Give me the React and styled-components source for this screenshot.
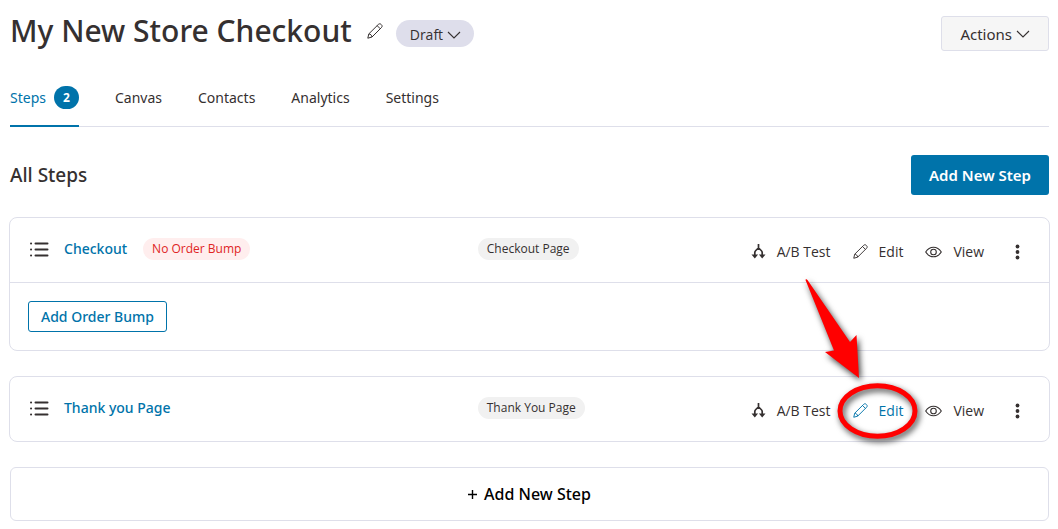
import React from 'react';
import styled, { createGlobalStyle } from 'styled-components';

const GlobalStyle = createGlobalStyle`
    :root {
        --main-blue: #0073aa;
        --main-border: #dedfea;
        --main-text: #353030;
        --medium-font: "Noto Sans", "Open Sans", sans-serif;
    }

    * {
        box-sizing: border-box;
    }

    body {
        margin: 0;
        background-color: #fff;
        color: var(--main-text);
        font-family: "Open Sans", "Noto Sans", sans-serif;
        font-size: 14px;
        line-height: 20px;
    }

    button {
        font-family: inherit;
        color: inherit;
        cursor: pointer;
    }

    h1, h2, h3 {
        margin: 0;
        font-family: var(--medium-font);
        font-weight: 500;
    }

    svg {
        display: block;
        flex-shrink: 0;
    }
`;

const Page = styled.main`
    padding: 10px 9px 8px 10px;
`;

const Header = styled.header`
    display: flex;
    justify-content: space-between;
    align-items: flex-end;
`;

const TitleGroup = styled.div`
    display: flex;
    align-items: center;
    height: 41px;

    h1 {
        font-size: 30px;
        line-height: 40px;
    }
`;

const IconButton = styled.button`
    display: flex;
    padding: 0;
    margin: 0 13px 0 15px;
    border: none;
    background: none;
`;

const StatusButton = styled.button`
    display: flex;
    align-items: center;
    gap: 4px;
    height: 27px;
    margin-top: 6px;
    padding: 2px 13px 0 14px;
    border: none;
    border-radius: 14px;
    background-color: #dedeeb;
    font-size: 14px;
`;

const ActionsButton = styled.button`
    display: flex;
    align-items: center;
    gap: 4px;
    height: 35px;
    padding: 0 18px;
    border: 1px solid var(--main-border);
    border-radius: 3px;
    background-color: #f6f6f6;
    font-family: var(--medium-font);
    font-size: 15px;
`;

const Tabs = styled.nav`
    display: flex;
    gap: 36px;
    height: 44px;
    margin: 32px 0 28px;
    border-bottom: 1px solid var(--main-border);
`;

const Tab = styled.a`
    display: flex;
    gap: 8px;
    height: 44px;
    line-height: 30px;
    color: ${({active}) => active ? 'var(--main-blue)' : 'inherit'};
    border-bottom: ${({active}) => active ? '2px solid var(--main-blue)' : 'none'};
    font-family: var(--medium-font);
    font-size: 14px;
    text-decoration: none;
`;

const Count = styled.span`
    width: 25px;
    height: 23px;
    margin-top: 3px;
    border-radius: 12px;
    background-color: var(--main-blue);
    color: #fff;
    font-size: 12px;
    font-weight: 700;
    line-height: 23px;
    text-align: center;
`;

const SectionHead = styled.div`
    display: flex;
    justify-content: space-between;
    align-items: center;
    margin-bottom: 22px;

    h2 {
        font-size: 19px;
        line-height: 26px;
    }
`;

const PrimaryButton = styled.button`
    height: 40px;
    padding: 0 18px;
    border: none;
    border-radius: 3px;
    background-color: var(--main-blue);
    color: #fff;
    font-family: var(--medium-font);
    font-size: 15px;
    font-weight: 600;
`;

const Card = styled.section`
    margin: 0 -1px 25px;
    border: 1px solid var(--main-border);
    border-radius: 8px;
`;

const CardRow = styled.div`
    display: grid;
    grid-template-columns: 45% 1fr auto;
    align-items: center;
    height: 64px;
    padding: 0 24px 2px 20px;
`;

const CardFooter = styled.div`
    padding: 18px;
    border-top: 1px solid var(--main-border);
`;

const StepName = styled.div`
    display: flex;
    align-items: center;

    a {
        margin: 0 16px 0 15px;
        color: var(--main-blue);
        font-family: var(--medium-font);
        font-size: 14px;
        font-weight: 500;
        text-decoration: none;
    }
`;

const Badge = styled.span`
    justify-self: start;
    padding: 0 9px;
    border-radius: 11px;
    background-color: ${({danger}) => danger ? '#ffeeee' : '#f1f1f1'};
    color: ${({danger}) => danger ? '#e02424' : 'inherit'};
    font-size: 12px;
    line-height: 22px;
`;

const OutlineButton = styled.button`
    height: 31px;
    padding: 0 12px;
    border: 1px solid var(--main-blue);
    border-radius: 3px;
    background-color: #fff;
    color: var(--main-blue);
    font-family: var(--medium-font);
    font-size: 14px;
    font-weight: 500;
`;

const RowActions = styled.div`
    display: flex;
    align-items: center;
    gap: 22px;
    padding: 5px 5px 0 0;
`;

const RowAction = styled.button`
    position: relative;
    display: flex;
    align-items: center;
    gap: 11px;
    padding: 0;
    border: none;
    background: none;
    color: ${({active}) => active ? 'var(--main-blue)' : 'inherit'};
    font-size: 14px;
    line-height: 20px;
`;

const MoreButton = styled(RowAction)`
    margin-left: 9px;
`;

const Pointer = styled.svg`
    position: absolute;
    top: -131px;
    left: -56px;
    pointer-events: none;
    filter: drop-shadow(2px 3px 3px rgba(0, 0, 0, 0.75));
`;

const AddRow = styled.button`
    display: flex;
    align-items: center;
    justify-content: center;
    gap: 7px;
    width: 100%;
    height: 54px;
    border: 1px solid var(--main-border);
    border-radius: 6px;
    background-color: #fff;
    color: #000;
    font-family: var(--medium-font);
    font-size: 16px;
    font-weight: 500;
`;

const Chevron = () => (
    <svg width="14" height="8" viewBox="0 0 14 8" fill="none" stroke="currentColor" strokeWidth="1.1">
        <path d="M1 1l6 6 6-6" />
    </svg>
);

const PencilIcon = ({size = 16}) => (
    <svg width={size} height={size} viewBox="0 0 16 16" fill="none" stroke="currentColor" strokeWidth="1" strokeLinejoin="round">
        <path d="M.8 15.200l1-4.300L11.400 1.400c.8-.8 1.900-.8 2.700 0l.4.4c.8.8.8 1.900 0 2.700L5 14z" />
        <path d="M10.200 2.700l3.100 3.100M1.900 10.900c1.600.1 2.900 1.400 3.100 3.100" />
    </svg>
);

const EyeIcon = () => (
    <svg width="17" height="12" viewBox="0 0 17 12" fill="none" stroke="currentColor" strokeWidth="1.100">
        <path d="M.7 6C2.600 3 5.300 1.200 8.500 1.200S14.400 3 16.300 6c-1.900 3-4.600 4.800-7.800 4.800S2.600 9 .7 6z" />
        <circle cx="8.500" cy="6" r="2.800" />
    </svg>
);

const SplitIcon = () => (
    <svg width="15" height="15" viewBox="0 0 14 15" fill="none" stroke="currentColor" strokeWidth="1.7">
        <path d="M7 0v4.500M3.300 12.500V8.600c0-.9.4-1.500 1-2.100L7 4l2.700 2.500c.6.6 1 1.200 1 2.100v3.900" />
        <path d="M0 10.600h6.600L3.300 14.500zM7.400 10.600H14l-3.300 3.900z" fill="currentColor" stroke="none" />
    </svg>
);

const ListIcon = () => (
    <svg width="19" height="15" viewBox="0 0 19 15" fill="none" stroke="currentColor" strokeWidth="2" strokeLinecap="round">
        <path d="M5.500 1.500H17.500M5.500 7.500H17.500M5.500 13.500H17.500M1 1.500h.1M1 7.500h.1M1 13.500h.1" />
    </svg>
);

const DotsIcon = () => (
    <svg width="5" height="16" viewBox="0 0 5 16" fill="currentColor">
        <circle cx="2.500" cy="2.500" r="1.900" />
        <circle cx="2.500" cy="8" r="1.900" />
        <circle cx="2.500" cy="13.500" r="1.900" />
    </svg>
);

const PlusIcon = () => (
    <svg width="9" height="9" viewBox="0 0 9 9" stroke="currentColor" strokeWidth="1.400">
        <path d="M4.500 0v9M0 4.500h9" />
    </svg>
);

const EditPointer = () => (
    <Pointer width="140" height="190" viewBox="0 0 140 190" aria-hidden="true">
        <path d="M9 9L10.500 10L53 72L59.500 65L62 108L28 82L37 80.500L8.500 10z" fill="#f00" />
        <ellipse cx="80.500" cy="141" rx="37.500" ry="25.200" fill="none" stroke="#f00" strokeWidth="5" />
    </Pointer>
);

const tabs = ['Canvas', 'Contacts', 'Analytics', 'Settings'];

const steps = [
    {name: 'Checkout', type: 'Checkout Page', bump: true},
    {name: 'Thank you Page', type: 'Thank You Page', highlighted: true},
];

const StepCard = ({data}) => {
    const {name, type, bump, highlighted} = data;
    return (
        <Card>
            <CardRow>
                <StepName>
                    <ListIcon />
                    <a href="#step">{name}</a>
                    {bump ? <Badge danger>No Order Bump</Badge> : null}
                </StepName>
                <Badge>{type}</Badge>
                <RowActions>
                    <RowAction><SplitIcon />A/B Test</RowAction>
                    <RowAction active={highlighted}>
                        <PencilIcon size={15} />Edit
                        {highlighted ? <EditPointer /> : null}
                    </RowAction>
                    <RowAction><EyeIcon />View</RowAction>
                    <MoreButton aria-label="More"><DotsIcon /></MoreButton>
                </RowActions>
            </CardRow>
            {
                bump ?
                <CardFooter>
                    <OutlineButton>Add Order Bump</OutlineButton>
                </CardFooter>
                :
                null
            }
        </Card>
    )
};

const App = () => (
    <>
        <GlobalStyle />
        <Page>
            <Header>
                <TitleGroup>
                    <h1>My New Store Checkout</h1>
                    <IconButton aria-label="Rename"><PencilIcon /></IconButton>
                    <StatusButton>Draft<Chevron /></StatusButton>
                </TitleGroup>
                <ActionsButton>Actions<Chevron /></ActionsButton>
            </Header>
            <Tabs>
                <Tab href="#steps" active>Steps<Count>{steps.length}</Count></Tab>
                {tabs.map(tab => <Tab key={tab} href={`#${tab.toLowerCase()}`}>{tab}</Tab>)}
            </Tabs>
            <SectionHead>
                <h2>All Steps</h2>
                <PrimaryButton>Add New Step</PrimaryButton>
            </SectionHead>
            {steps.map(step => <StepCard key={step.name} data={step} />)}
            <AddRow><PlusIcon />Add New Step</AddRow>
        </Page>
    </>
);

export default App
